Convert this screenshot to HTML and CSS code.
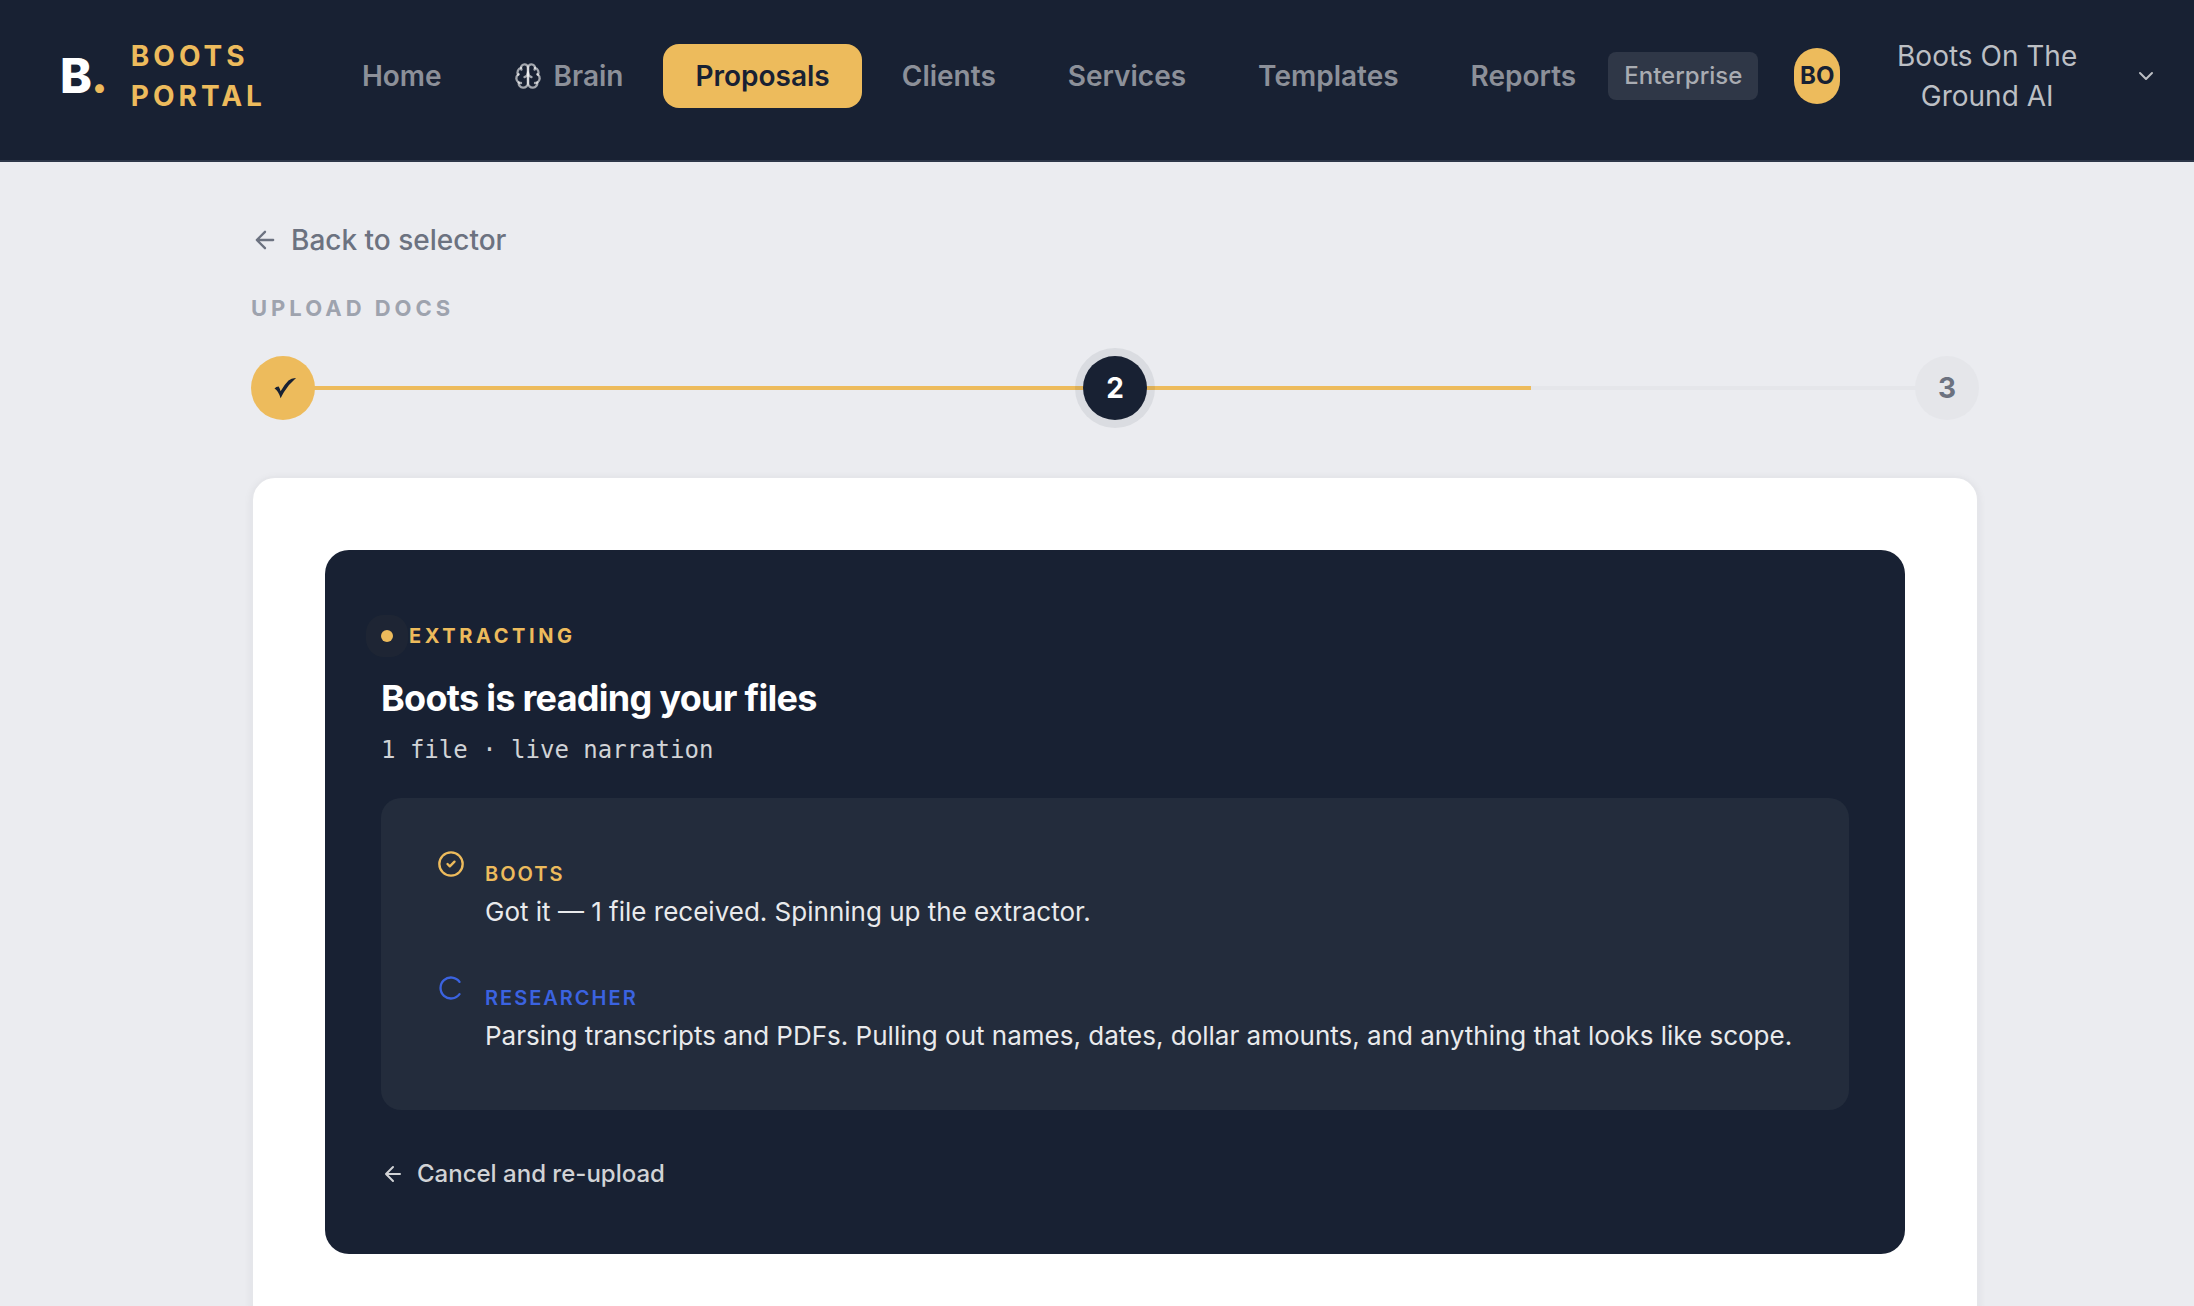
FILE: index.html
```html
<!DOCTYPE html>
<html lang="en">
<head>
  <meta charset="UTF-8">
  <meta name="viewport" content="width=device-width, initial-scale=1.0">
  <title>Boots Portal</title>
  <link rel="stylesheet" href="styles.css">
</head>
<body>
  <header class="header">
    <a class="brand" href="#">
      <span class="brand-mark">B<span class="brand-dot">.</span></span>
      <span class="brand-name">BOOTS<br>PORTAL</span>
    </a>
    <nav class="nav">
      <a class="nav-link" href="#">Home</a>
      <a class="nav-link" href="#">
        <svg class="icon" viewBox="0 0 24 24">
          <path d="M12 5a3 3 0 1 0-5.997.125 4 4 0 0 0-2.526 5.77 4 4 0 0 0 .556 6.588A4 4 0 1 0 12 18Z"/>
          <path d="M12 5a3 3 0 1 1 5.997.125 4 4 0 0 1 2.526 5.77 4 4 0 0 1-.556 6.588A4 4 0 1 1 12 18Z"/>
          <path d="M15 13a4.500 4.500 0 0 1-3-4 4.500 4.500 0 0 1-3 4"/>
          <path d="M17.599 6.500a3 3 0 0 0 .399-1.375M6.003 5.125A3 3 0 0 0 6.401 6.500M3.477 10.896a4 4 0 0 1 .585-.396M19.938 10.500a4 4 0 0 1 .585.396M6 18a4 4 0 0 1-1.967-.516M19.967 17.484A4 4 0 0 1 18 18"/>
        </svg>
        Brain
      </a>
      <a class="nav-link active" href="#">Proposals</a>
      <a class="nav-link" href="#">Clients</a>
      <a class="nav-link" href="#">Services</a>
      <a class="nav-link" href="#">Templates</a>
      <a class="nav-link" href="#">Reports</a>
    </nav>
    <div class="account">
      <span class="plan">Enterprise</span>
      <button class="user" type="button">
        <span class="avatar">BO</span>
        <span class="user-name">Boots On The Ground AI</span>
        <svg class="icon icon-md" viewBox="0 0 24 24"><path d="m6 9 6 6 6-6"/></svg>
      </button>
    </div>
  </header>

  <main class="main">
    <a class="back" href="#">
      <svg class="icon" viewBox="0 0 24 24"><path d="m12 19-7-7 7-7M19 12H5"/></svg>
      Back to selector
    </a>
    <p class="section-label">UPLOAD DOCS</p>
    <ol class="steps">
      <li class="step done">
        <svg class="tick" viewBox="0 0 64 64"><path d="M23.500 32.500Q25 30.800 27.700 30.600Q28.800 32.500 29.600 35.200Q33 29 37.500 24.500Q40.500 21.800 45 22Q37.500 28.500 33 36Q31 39.500 29.600 42.200Q27.500 35 23.500 32.500Z"/></svg>
      </li>
      <li class="step current">2</li>
      <li class="step">3</li>
    </ol>

    <section class="card">
      <div class="panel">
        <p class="status"><span class="pulse"></span>EXTRACTING</p>
        <h1 class="title">Boots is reading your files</h1>
        <p class="meta">1 file · live narration</p>
        <ul class="log">
          <li class="entry">
            <svg class="icon boots" viewBox="0 0 24 24"><circle cx="12" cy="12" r="10"/><path d="m9 12 2 2 4-4"/></svg>
            <div>
              <p class="agent boots">BOOTS</p>
              <p class="message">Got it — 1 file received. Spinning up the extractor.</p>
            </div>
          </li>
          <li class="entry">
            <svg class="icon researcher" viewBox="0 0 24 24"><path d="M19.300 17.300a9 9 0 1 1 0-10.600"/></svg>
            <div>
              <p class="agent researcher">RESEARCHER</p>
              <p class="message">Parsing transcripts and PDFs. Pulling out names, dates, dollar amounts, and anything that looks like scope.</p>
            </div>
          </li>
        </ul>
        <button class="cancel" type="button">
          <svg class="icon icon-md" viewBox="0 0 24 24"><path d="m12 19-7-7 7-7M19 12H5"/></svg>
          Cancel and re-upload
        </button>
      </div>
    </section>
  </main>
</body>
</html>
```

FILE: styles.css
```css
* {
  padding: 0;
  margin: 0;
  box-sizing: border-box;
}
:root {
  --navy: #182133;
  --gold: #edbb5c;
  --line: #e5e6ea;
  --blue: #3b63e0;
}
html, body {
  height: 100%;
}
body {
  background: #ebecf0;
  font-family: Inter, "Liberation Sans", sans-serif;
  font-size: 28px;
  line-height: 40px;
  overflow: hidden;
}
a {
  color: inherit;
  text-decoration: none;
}
ul, ol {
  list-style: none;
}
button {
  border: 0;
  background: none;
  color: inherit;
  font: inherit;
  cursor: pointer;
}
.icon {
  flex: none;
  width: 28px;
  height: 28px;
  fill: none;
  stroke: currentColor;
  stroke-width: 2;
  stroke-linecap: round;
  stroke-linejoin: round;
}
.icon-md {
  width: 24px;
  height: 24px;
}

/* header */
.header {
  display: flex;
  align-items: center;
  padding: 36px 36px 44px 60px;
  border-bottom: 2px solid #2c3648;
  background: var(--navy);
}
.brand {
  display: flex;
  align-items: center;
  gap: 24px;
}
.brand-mark {
  color: #fff;
  font-size: 48px;
  font-weight: 800;
  letter-spacing: -1px;
}
.brand-dot {
  color: var(--gold);
}
.brand-name {
  color: var(--gold);
  font-weight: 700;
  letter-spacing: 4px;
}
.nav {
  display: flex;
  align-items: center;
  gap: 8px;
  margin-left: 64px;
}
.nav-link {
  display: flex;
  align-items: center;
  gap: 12px;
  padding: 12px 32px;
  border-radius: 16px;
  color: #8c9099;
  font-weight: 600;
}
.nav-link .icon {
  color: rgba(255, 255, 255, 0.6);
}
.nav-link.active {
  background: var(--gold);
  color: var(--navy);
}
.account {
  display: flex;
  flex: 1;
  align-items: center;
  gap: 36px;
}
.plan {
  padding: 4px 16px;
  border-radius: 8px;
  background: #2f3747;
  color: #a9acb2;
  font-size: 24px;
  font-weight: 500;
}
.user {
  display: flex;
  flex: 1;
  align-items: center;
  color: #bcbfc4;
}
.avatar {
  width: 46px;
  border-radius: 28px;
  background: var(--gold);
  color: var(--navy);
  font-size: 24px;
  font-weight: 700;
  line-height: 56px;
}
.user-name {
  flex: 1;
  padding: 0 48px;
}

/* page */
.main {
  max-width: 1800px;
  margin: 0 auto;
  padding: 58px 18px 56px 54px;
}
.back {
  display: flex;
  align-items: center;
  gap: 12px;
  width: fit-content;
  color: #6c7280;
  font-weight: 500;
}
.section-label {
  margin: 32px 0;
  color: #9ea3ae;
  font-size: 22px;
  font-weight: 700;
  letter-spacing: 4px;
  line-height: 32px;
}
.steps {
  display: flex;
  justify-content: space-between;
  margin-bottom: 56px;
  /* track runs between the outer circle centres, filled to 75% */
  background:
    linear-gradient(90deg, var(--gold) 75%, var(--line) 75%)
    32px center / calc(100% - 64px) 4px no-repeat;
}
.step {
  width: 64px;
  height: 64px;
  border-radius: 50%;
  background: var(--line);
  color: #6c7280;
  font-weight: 700;
  line-height: 64px;
  text-align: center;
}
.step.done {
  background: var(--gold);
}
.step.current {
  background: var(--navy);
  box-shadow: 0 0 0 8px rgba(25, 33, 50, 0.08);
  color: #fff;
}
.tick {
  display: block;
  fill: var(--navy);
}
.card {
  padding: 72px;
  border: 2px solid var(--line);
  border-radius: 24px;
  background: #fff;
  box-shadow: 0 2px 8px rgba(25, 33, 50, 0.06);
}
.panel {
  padding: 70px 56px 60px;
  border-radius: 24px;
  background: var(--navy);
  color: #fff;
}
.status {
  display: flex;
  align-items: center;
  gap: 16px;
  color: var(--gold);
  font-size: 20px;
  font-weight: 700;
  letter-spacing: 0.18em;
  line-height: 32px;
}
.pulse {
  width: 12px;
  height: 12px;
  border-radius: 50%;
  background: var(--gold);
  box-shadow: 0 0 0 15px rgba(237, 187, 92, 0.03);
}
.title {
  margin-top: 22px;
  font-size: 36px;
  font-weight: 700;
  letter-spacing: -0.02em;
  line-height: 48px;
}
.meta {
  margin: 8px 0 28px;
  color: #d1d3d6;
  font-family: "DejaVu Sans Mono", monospace;
  font-size: 24px;
  line-height: 40px;
}
.log {
  display: grid;
  gap: 40px;
  padding: 52px 56px;
  border-radius: 20px;
  background: #232c3c;
}
.entry {
  display: flex;
  gap: 20px;
}
.agent {
  margin-top: 8px;
  font-size: 20px;
  font-weight: 600;
  letter-spacing: 2px;
  line-height: 32px;
}
.boots {
  color: var(--gold);
}
.researcher {
  color: var(--blue);
}
.message {
  color: #e9eaec;
  font-size: 26px;
  line-height: 44px;
}
.cancel {
  display: flex;
  align-items: center;
  gap: 12px;
  margin-top: 44px;
  color: #d1d3d6;
  font-size: 24px;
  font-weight: 500;
}
```
